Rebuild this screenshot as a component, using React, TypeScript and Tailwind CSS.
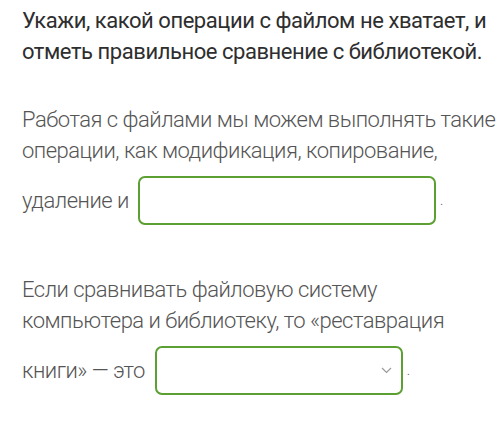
import React from "react";

export default function App() {
  return (
    <div className="w-[500px] h-[443px] bg-white overflow-hidden pl-[22px] pt-[5px]" style={{ fontFamily: "Roboto, 'Noto Sans', sans-serif" }}>
      <div className="text-[22px] leading-[31px] tracking-[-0.45px] font-normal text-[#2e2e2e] whitespace-nowrap">
        <div>Укажи, какой операции с файлом не хватает, и</div>
        <div>отметь правильное сравнение с библиотекой.</div>
      </div>
      <div className="mt-[37px] text-[22px] leading-[31px] tracking-[-0.5px] font-light text-[#555555] whitespace-nowrap">
        <div>Работая с файлами мы можем выполнять такие</div>
        <div>операции, как модификация, копирование,</div>
        <div className="flex items-center mt-[10px]">
          <span>удаление и</span>
          <div className="ml-[9px] w-[298px] h-[49px] rounded-[7px] border-2 border-[#5c9f32] bg-white"></div>
          <span className="ml-[4px] text-[14px]">.</span>
        </div>
      </div>
      <div className="mt-[49px] text-[22px] leading-[31px] tracking-[-0.5px] font-light text-[#555555] whitespace-nowrap">
        <div>Если сравнивать файловую систему</div>
        <div>компьютера и библиотеку, то «реставрация</div>
        <div className="flex items-center mt-[10px]">
          <span>книги» — это</span>
          <div className="ml-[10px] w-[248px] h-[49px] rounded-[7px] border-2 border-[#5c9f32] bg-white flex items-center justify-end pr-[9px]">
            <svg width="11" height="7" viewBox="0 0 11 7" fill="none">
              <path d="M1 1L5.5 5.5L10 1" stroke="#9a9a9a" strokeWidth="1.2" />
            </svg>
          </div>
          <span className="ml-[4px] text-[14px]">.</span>
        </div>
      </div>
    </div>
  );
}
